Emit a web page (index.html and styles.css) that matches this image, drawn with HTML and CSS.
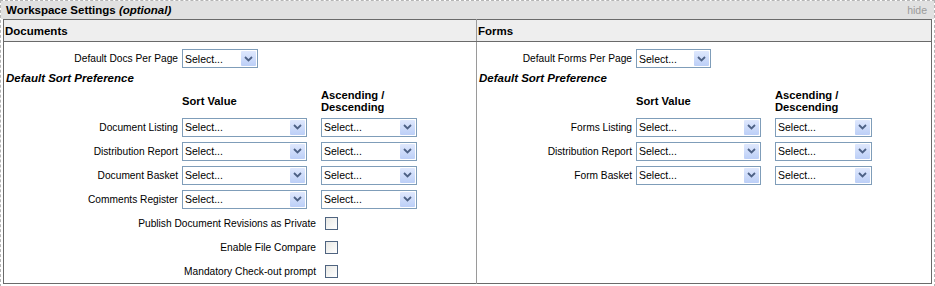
FILE: index.html
```html
<!DOCTYPE html>
<html>
<head>
    <meta charset="utf-8">
    <title>Workspace Settings</title>
    <link rel="stylesheet" href="styles.css">
</head>
<body>
    <div class="panel">
        <div class="panel-head">
            <span class="panel-title">Workspace Settings <i>(optional)</i></span>
            <a class="hide-link">hide</a>
        </div>
        <table class="settings">
            <colgroup>
                <col class="half-left" />
                <col />
            </colgroup>
            <thead>
                <tr>
                    <th class="left-cell">Documents</th>
                    <th class="right-cell">Forms</th>
                </tr>
            </thead>
            <tbody>
                <tr>
                    <td class="left-cell">
                        <div class="form form-docs">
                            <label class="lbl">Default Docs Per Page</label>
                            <div class="span-2"><span class="dd w-76"><select><option>Select...</option></select><span class="dd-btn"><svg width="9" height="6" viewBox="0 0 9 6"><path d="M1 1 L4.5 4.5 L8 1" fill="none" stroke="#4d6185" stroke-width="1.8"/></svg></span></span></div>

                            <div class="pref">Default Sort Preference</div>

                            <div></div>
                            <div class="col-head">Sort Value</div>
                            <div class="col-head">Ascending /<br/>Descending</div>

                            <label class="lbl">Document Listing</label>
                            <div><span class="dd w-125"><select><option>Select...</option></select><span class="dd-btn"><svg width="9" height="6" viewBox="0 0 9 6"><path d="M1 1 L4.5 4.5 L8 1" fill="none" stroke="#4d6185" stroke-width="1.8"/></svg></span></span></div>
                            <div><span class="dd w-96"><select><option>Select...</option></select><span class="dd-btn"><svg width="9" height="6" viewBox="0 0 9 6"><path d="M1 1 L4.5 4.5 L8 1" fill="none" stroke="#4d6185" stroke-width="1.8"/></svg></span></span></div>

                            <label class="lbl">Distribution Report</label>
                            <div><span class="dd w-125"><select><option>Select...</option></select><span class="dd-btn"><svg width="9" height="6" viewBox="0 0 9 6"><path d="M1 1 L4.5 4.5 L8 1" fill="none" stroke="#4d6185" stroke-width="1.8"/></svg></span></span></div>
                            <div><span class="dd w-96"><select><option>Select...</option></select><span class="dd-btn"><svg width="9" height="6" viewBox="0 0 9 6"><path d="M1 1 L4.5 4.5 L8 1" fill="none" stroke="#4d6185" stroke-width="1.8"/></svg></span></span></div>

                            <label class="lbl">Document Basket</label>
                            <div><span class="dd w-125"><select><option>Select...</option></select><span class="dd-btn"><svg width="9" height="6" viewBox="0 0 9 6"><path d="M1 1 L4.5 4.5 L8 1" fill="none" stroke="#4d6185" stroke-width="1.8"/></svg></span></span></div>
                            <div><span class="dd w-96"><select><option>Select...</option></select><span class="dd-btn"><svg width="9" height="6" viewBox="0 0 9 6"><path d="M1 1 L4.5 4.5 L8 1" fill="none" stroke="#4d6185" stroke-width="1.8"/></svg></span></span></div>

                            <label class="lbl">Comments Register</label>
                            <div><span class="dd w-125"><select><option>Select...</option></select><span class="dd-btn"><svg width="9" height="6" viewBox="0 0 9 6"><path d="M1 1 L4.5 4.5 L8 1" fill="none" stroke="#4d6185" stroke-width="1.8"/></svg></span></span></div>
                            <div><span class="dd w-96"><select><option>Select...</option></select><span class="dd-btn"><svg width="9" height="6" viewBox="0 0 9 6"><path d="M1 1 L4.5 4.5 L8 1" fill="none" stroke="#4d6185" stroke-width="1.8"/></svg></span></span></div>

                            <label class="lbl chk-lbl">Publish Document Revisions as Private</label>
                            <div><input type="checkbox" class="chk" /></div>

                            <label class="lbl chk-lbl">Enable File Compare</label>
                            <div><input type="checkbox" class="chk" /></div>

                            <label class="lbl chk-lbl">Mandatory Check-out prompt</label>
                            <div><input type="checkbox" class="chk" /></div>
                        </div>
                    </td>
                    <td class="right-cell">
                        <div class="form form-forms">
                            <label class="lbl">Default Forms Per Page</label>
                            <div class="span-2"><span class="dd w-75"><select><option>Select...</option></select><span class="dd-btn"><svg width="9" height="6" viewBox="0 0 9 6"><path d="M1 1 L4.5 4.5 L8 1" fill="none" stroke="#4d6185" stroke-width="1.8"/></svg></span></span></div>

                            <div class="pref">Default Sort Preference</div>

                            <div></div>
                            <div class="col-head">Sort Value</div>
                            <div class="col-head">Ascending /<br/>Descending</div>

                            <label class="lbl">Forms Listing</label>
                            <div><span class="dd w-125"><select><option>Select...</option></select><span class="dd-btn"><svg width="9" height="6" viewBox="0 0 9 6"><path d="M1 1 L4.5 4.5 L8 1" fill="none" stroke="#4d6185" stroke-width="1.8"/></svg></span></span></div>
                            <div><span class="dd w-97"><select><option>Select...</option></select><span class="dd-btn"><svg width="9" height="6" viewBox="0 0 9 6"><path d="M1 1 L4.5 4.5 L8 1" fill="none" stroke="#4d6185" stroke-width="1.8"/></svg></span></span></div>

                            <label class="lbl">Distribution Report</label>
                            <div><span class="dd w-125"><select><option>Select...</option></select><span class="dd-btn"><svg width="9" height="6" viewBox="0 0 9 6"><path d="M1 1 L4.5 4.5 L8 1" fill="none" stroke="#4d6185" stroke-width="1.8"/></svg></span></span></div>
                            <div><span class="dd w-97"><select><option>Select...</option></select><span class="dd-btn"><svg width="9" height="6" viewBox="0 0 9 6"><path d="M1 1 L4.5 4.5 L8 1" fill="none" stroke="#4d6185" stroke-width="1.8"/></svg></span></span></div>

                            <label class="lbl">Form Basket</label>
                            <div><span class="dd w-125"><select><option>Select...</option></select><span class="dd-btn"><svg width="9" height="6" viewBox="0 0 9 6"><path d="M1 1 L4.5 4.5 L8 1" fill="none" stroke="#4d6185" stroke-width="1.8"/></svg></span></span></div>
                            <div><span class="dd w-97"><select><option>Select...</option></select><span class="dd-btn"><svg width="9" height="6" viewBox="0 0 9 6"><path d="M1 1 L4.5 4.5 L8 1" fill="none" stroke="#4d6185" stroke-width="1.8"/></svg></span></span></div>
                        </div>
                    </td>
                </tr>
            </tbody>
        </table>
    </div>
</body>
</html>
```

FILE: styles.css
```css
body {
    margin: 0;
    font-family: Tahoma, "Liberation Sans", sans-serif;
    font-size: 10.2px;
    color: #000;
    background: #fff;
}

/* outer dashed box */
.panel {
    width: 933px;
    height: 285px;
    border: 1px dashed #b5b5b5;
}
.panel-head {
    display: flex;
    justify-content: space-between;
    align-items: center;
    height: 18px;
    padding: 0 7px 0 5px;
    background: #e1e1e1;
}
.panel-title {
    font-weight: bold;
    font-size: 11.5px;
}
.hide-link {
    color: #9a9a9a;
    font-size: 10.5px;
}

/* two column settings table */
table.settings {
    width: 929px;
    margin-left: 2px;
    border-collapse: collapse;
    border: 1px solid #6a6a6a;
}
.half-left {
    width: 473px;
}
table.settings th {
    height: 21px;
    padding: 0 0 0 1px;
    text-align: left;
    font-weight: bold;
    font-size: 11.5px;
    background: #eeeeee;
    border-bottom: 1px solid #6a6a6a;
}
table.settings > tbody > tr > td {
    vertical-align: top;
    height: 241px;
    padding: 0;
}
.left-cell {
    border-right: 1px solid #9a9a9a;
}
.right-cell {
    border-left: 1px solid #6a6a6a;
}

/* inner form grids */
.form {
    display: grid;
    align-items: center;
    margin-top: 5px;
    white-space: nowrap;
}
.form-docs {
    grid-template-columns: 178px 139px auto;
    grid-template-rows: 23px 16px 29px repeat(7, 24px);
}
.form-forms {
    grid-template-columns: 159px 139px auto;
    grid-template-rows: 23px 16px 29px repeat(3, 24px);
}
.lbl {
    text-align: right;
    padding-right: 4px;
}
.chk-lbl {
    grid-column: 1 / 3;
    padding-right: 5px;
}
.span-2 {
    grid-column: 2 / 4;
}
.pref {
    grid-column: 1 / 4;
    padding-left: 2px;
    font-weight: bold;
    font-style: italic;
    font-size: 11.5px;
}
.col-head {
    font-weight: bold;
    font-size: 11.2px;
    line-height: 12px;
}

/* XP-style dropdowns */
.dd {
    display: flex;
    align-items: stretch;
    height: 17px;
    border: 1px solid #7f9db9;
    background: #fff;
}
.dd select {
    flex: 1;
    min-width: 0;
    border: none;
    padding: 0 0 0 2px;
    margin: 0;
    background: transparent;
    appearance: none;
    -webkit-appearance: none;
    font-family: Tahoma, "Liberation Sans", sans-serif;
    font-size: 10.5px;
    color: #000;
    outline: none;
}
.dd-btn {
    display: flex;
    align-items: center;
    justify-content: center;
    width: 15px;
    margin: 1px;
    background: linear-gradient(#dfe8fd, #bccff7);
    border-radius: 1px;
}
.w-75 { width: 73px; }
.w-76 { width: 74px; }
.w-96 { width: 94px; }
.w-97 { width: 95px; }
.w-125 { width: 123px; }

/* checkboxes */
.chk {
    display: block;
    appearance: none;
    -webkit-appearance: none;
    width: 13px;
    height: 13px;
    margin: 0 0 0 4px;
    border: 1px solid #4f6480;
    background: linear-gradient(135deg, #e8e8e4, #ffffff);
}
```
